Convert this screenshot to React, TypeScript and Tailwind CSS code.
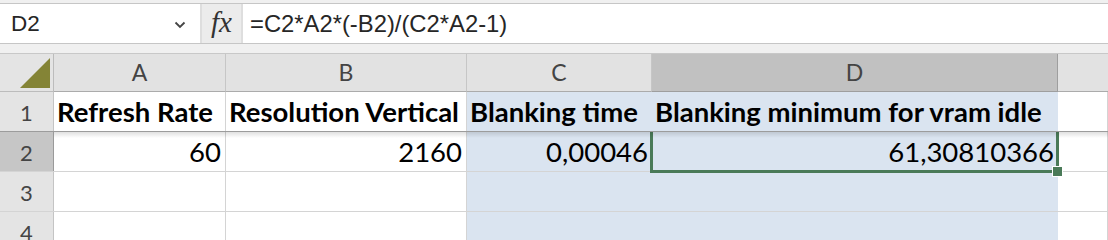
import React from "react";

const GRID = "border-[#d4d4d4]";

function Cell({
  w,
  children,
  align = "left",
  bold = false,
  blue = false,
  last = false,
  className = "",
}: {
  w: string;
  children?: React.ReactNode;
  align?: "left" | "right";
  bold?: boolean;
  blue?: boolean;
  last?: boolean;
  className?: string;
}) {
  return (
    <div
      className={`${w} h-full flex items-end pb-[6px] whitespace-nowrap overflow-visible text-[27.5px] leading-none text-black ${
        align === "right" ? "justify-end pr-[4px]" : "justify-start pl-[3px]"
      } ${bold ? "font-bold" : ""} ${blue ? "bg-[#dae4f0]" : `bg-white border-r ${GRID}`} ${
        last ? "flex-1" : ""
      } ${className}`}
    >
      {children}
    </div>
  );
}

function RowHeader({ n, selected = false }: { n: number; selected?: boolean }) {
  return (
    <div
      className={`w-[54px] shrink-0 h-full flex items-end justify-center pb-[7px] text-[22px] leading-none text-[#444] border-r ${
        selected ? "bg-[#c6c6c6] border-[#9a9a9a]" : "bg-[#e4e4e4] border-[#c4c4c4]"
      }`}
    >
      {n}
    </div>
  );
}

export default function App() {
  return (
    <div className="w-[1108px] h-[240px] overflow-hidden bg-white font-['Lato',sans-serif]">
      {/* Formula bar */}
      <div className="h-[54px] bg-[#f0f0f0] border-b border-[#c8c8c8] pt-[3px]">
        <div className="h-[41px] border-t border-b border-[#c6c6c6] flex">
          <div className="w-[200px] bg-white flex items-center justify-between pl-[11px] pr-[14px] font-['Liberation_Sans',sans-serif] text-[22.5px] text-[#262626]">
            <span>D2</span>
            <svg width="12" height="8" viewBox="0 0 12 8" className="mt-[3px]">
              <path d="M1.5 1.5 L6 6 L10.5 1.5" fill="none" stroke="#444" strokeWidth="1.8" />
            </svg>
          </div>
          <div className="w-[2px] bg-[#dedede]" />
          <div className="w-[39px] bg-[#ececec] flex items-center justify-center">
            <span className="font-['Liberation_Serif',serif] italic text-[29px] leading-none text-[#333] -mt-[2px]">
              fx
            </span>
          </div>
          <div className="w-[2px] bg-[#dedede]" />
          <div className="flex-1 bg-white flex items-center pl-[7px] font-['Liberation_Sans',sans-serif] text-[23.8px] text-[#262626]">
            =C2*A2*(-B2)/(C2*A2-1)
          </div>
        </div>
      </div>

      {/* Column headers */}
      <div className="h-[38px] flex text-[23px] text-[#444] leading-none">
        <div className="w-[54px] shrink-0 bg-[#e4e4e4] border-r border-b border-[#bcbcbc] flex items-end justify-end pr-[3px] pb-[3px]">
          <svg width="30" height="30" viewBox="0 0 30 30">
            <polygon points="0,30 30,30 30,0" fill="#848436" />
          </svg>
        </div>
        <div className="w-[172px] shrink-0 bg-[#e2e2e2] border-r border-b border-[#c6c6c6] border-b-[#ababab] flex items-center justify-center">
          A
        </div>
        <div className="w-[241px] shrink-0 bg-[#e2e2e2] border-r border-b border-[#c6c6c6] border-b-[#ababab] flex items-center justify-center">
          B
        </div>
        <div className="w-[185px] shrink-0 bg-[#e2e2e2] border-r border-b border-[#c6c6c6] border-b-[#ababab] flex items-center justify-center">
          C
        </div>
        <div className="w-[406px] shrink-0 bg-[#c1c1c1] border-r border-b border-[#9e9e9e] flex items-center justify-center">
          D
        </div>
        <div className="flex-1 bg-[#e2e2e2] border-b border-[#ababab]" />
      </div>

      {/* Row 1 */}
      <div className="h-[40px] flex border-b border-[#9c9c9c]">
        <RowHeader n={1} />
        <Cell w="w-[172px] shrink-0" bold>Refresh Rate</Cell>
        <Cell w="w-[241px] shrink-0" bold>Resolution Vertical</Cell>
        <Cell w="w-[185px] shrink-0" bold blue>Blanking time</Cell>
        <Cell w="w-[406px] shrink-0" bold blue>Blanking minimum for vram idle</Cell>
        <Cell w="" last />
      </div>

      {/* Row 2 */}
      <div className="relative h-[40px] flex border-b border-[#d4d4d4]">
        <RowHeader n={2} selected />
        <Cell w="w-[172px] shrink-0" align="right">60</Cell>
        <Cell w="w-[241px] shrink-0" align="right">2160</Cell>
        <Cell w="w-[185px] shrink-0" align="right" blue>0,00046</Cell>
        <div className="relative w-[406px] shrink-0 h-full">
          <Cell w="w-full" align="right" blue>61,30810366</Cell>
          <div className="absolute left-[-2px] right-[-1px] top-0 bottom-[-2px] border-l-[3px] border-r-[3px] border-b-[3px] border-[#4a7a58] pointer-events-none" />
          <div className="absolute right-[-5px] bottom-[-6px] w-[11px] h-[11px] bg-white p-[1px]">
            <div className="w-full h-full bg-[#4a7a58]" />
          </div>
        </div>
        <Cell w="" last />
        <div className="absolute left-[54px] right-0 top-0 h-[6px] bg-gradient-to-b from-[rgba(0,0,0,0.12)] to-transparent pointer-events-none" />
      </div>

      {/* Row 3 */}
      <div className="h-[40px] flex border-b border-[#d4d4d4]">
        <RowHeader n={3} />
        <Cell w="w-[172px] shrink-0" />
        <Cell w="w-[241px] shrink-0" />
        <Cell w="w-[185px] shrink-0" blue />
        <Cell w="w-[406px] shrink-0" blue />
        <Cell w="" last />
      </div>

      {/* Row 4 */}
      <div className="h-[40px] flex border-b border-[#d4d4d4]">
        <RowHeader n={4} />
        <Cell w="w-[172px] shrink-0" />
        <Cell w="w-[241px] shrink-0" />
        <Cell w="w-[185px] shrink-0" blue />
        <Cell w="w-[406px] shrink-0" blue />
        <Cell w="" last />
      </div>
    </div>
  );
}
